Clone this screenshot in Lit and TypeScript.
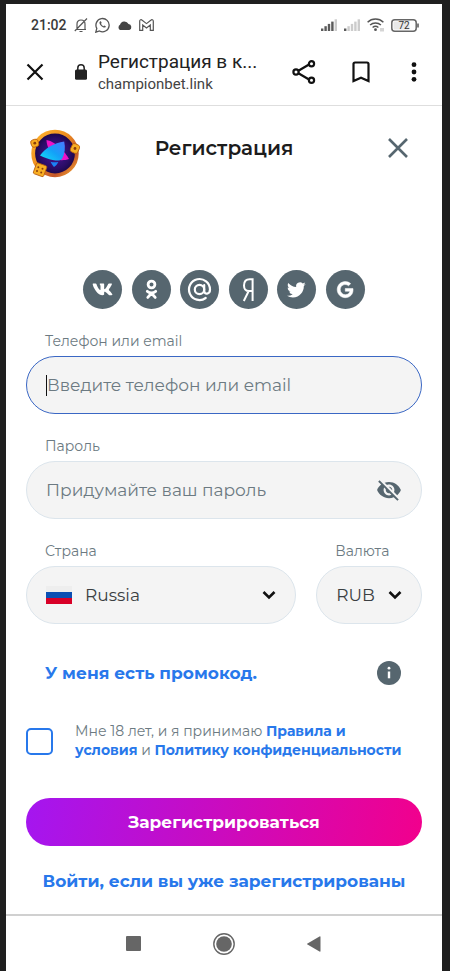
import { LitElement, html, css, svg } from "lit";
import { customElement } from "lit/decorators.js";

const socials = [
  {
    name: "VK",
    art: svg`<path transform="translate(9 10) scale(.0365)" fill="currentColor" d="M545 117.7c3.7-12.5 0-21.7-17.8-21.7h-58.9c-15 0-21.9 7.9-25.6 16.7 0 0-30 73.1-72.4 120.5-13.7 13.7-20 18.1-27.5 18.1-3.7 0-9.4-4.4-9.4-16.9V117.7c0-15-4.2-21.7-16.6-21.7h-92.6c-9.4 0-15 7-15 13.5 0 14.2 21.2 17.5 23.4 57.5v86.8c0 19-3.4 22.5-10.9 22.5-20 0-68.6-73.4-97.4-157.4-5.8-16.3-11.5-22.9-26.6-22.9H38.8c-16.8 0-20.2 7.9-20.2 16.7 0 15.6 20 93.1 93.1 195.5C160.4 378.1 229 416 291.4 416c37.5 0 42.1-8.4 42.1-22.9 0-66.8-3.4-73.1 15.4-73.1 8.7 0 23.7 4.4 58.7 38.1 40 40 46.6 57.9 69 57.9h58.9c16.8 0 25.3-8.4 20.4-25-11.2-34.9-86.9-106.7-90.3-111.5-8.7-11.2-6.2-16.2 0-26.2.1-.1 72-101.3 79.4-135.6z"/>`,
  },
  {
    name: "Одноклассники",
    art: svg`<g fill="none" stroke="currentColor" stroke-width="2.8" stroke-linecap="round" stroke-linejoin="round"><circle cx="19.500" cy="14.500" r="3.400"/><path d="M15.300 21.300c2.600 1.900 5.800 1.900 8.400 0M19.500 23.200l-3.700 4.200M19.500 23.200l3.700 4.200"/></g>`,
  },
  {
    name: "Mail.ru",
    art: svg`<g fill="none" stroke="currentColor" stroke-width="2.200" stroke-linecap="round"><circle cx="19.500" cy="19.500" r="4.700"/><path d="M24.200 15.200v5.600c0 4.200 5.800 3.600 5.800-1.300a10.500 10.500 0 1 0-4.300 8.500"/></g>`,
  },
  {
    name: "Яндекс",
    art: svg`<path fill="none" stroke="currentColor" stroke-width="2" d="M23.600 31V9.300h-2.800c-4.200 0-5.800 3-5.800 6.200 0 3.400 2 5.600 5 5.600h3.600M19.600 21.200L14.800 31"/>`,
  },
  {
    name: "Twitter",
    art: svg`<path transform="translate(10 10.500) scale(.78)" fill="currentColor" d="M23.953 4.570a10 10 0 01-2.825.775 4.958 4.958 0 002.163-2.723c-.951.555-2.005.959-3.127 1.184a4.920 4.920 0 00-8.384 4.482C7.690 8.095 4.067 6.130 1.640 3.162a4.822 4.822 0 00-.666 2.475c0 1.710.870 3.213 2.188 4.096a4.904 4.904 0 01-2.228-.616v.060a4.923 4.923 0 003.946 4.827 4.996 4.996 0 01-2.212.085 4.936 4.936 0 004.604 3.417 9.867 9.867 0 01-6.102 2.105c-.390 0-.779-.023-1.170-.067a13.995 13.995 0 007.557 2.209c9.053 0 13.998-7.496 13.998-13.985 0-.210 0-.420-.015-.630A9.935 9.935 0 0024 4.590z"/>`,
  },
  {
    name: "Google",
    art: svg`<path transform="translate(11.200 11.300) scale(.0325)" fill="currentColor" stroke="currentColor" stroke-width="16" d="M488 261.800C488 403.300 391.100 504 248 504 110.800 504 0 393.200 0 256S110.800 8 248 8c66.800 0 123 24.500 166.300 64.900l-67.500 64.900C258.500 52.600 94.300 116.600 94.300 256c0 86.500 69.100 156.600 153.700 156.600 98.200 0 135-70.400 140.800-106.900H248v-85.300h236.100c2.300 12.700 3.900 24.900 3.900 41.400z"/>`,
  },
];

const signal = (level: number) =>
  svg`${[0, 1, 2, 3, 4].map(
    (i) => svg`<rect x=${i * 3.4} y=${9.5 - i * 2.3} width="2.4" height=${2.5 + i * 2.3} fill=${i < level ? "#5a5a5a" : "#cccccc"}/>`
  )}`;

const chevron = html`<svg class="chevron" width="14" height="10" viewBox="0 0 14 10" aria-hidden="true"><path d="M1.500 2l5.500 5.500L12.500 2" fill="none" stroke="#111" stroke-width="2.600"/></svg>`;

@customElement("app-root")
export class AppRoot extends LitElement {
  static styles = css`
    :host {
      display: block;
      font-family: Montserrat, Inter, "Noto Sans", sans-serif;
      color: #1f2326;
    }
    * { box-sizing: border-box; }
    svg { display: block; flex: none; }
    button, input, select { font: inherit; color: inherit; margin: 0; padding: 0; border: 0; background: none; }
    button { cursor: pointer; }
    a { color: #2878eb; text-decoration: none; font-weight: 700; }
    .device {
      min-height: 100vh;
      padding: 4px 8px 0 6px;
      background: #1f1f1f;
      display: flex;
    }
    .screen {
      flex: 1;
      min-width: 0;
      display: flex;
      flex-direction: column;
      background: #fff;
    }
    .status {
      display: flex;
      align-items: center;
      height: 42px;
      padding: 0 23px 0 25px;
      gap: 7px;
      font: 500 14px/20px Roboto, sans-serif;
      color: #3a3a3a;
    }
    .spacer { flex: 1; }
    .browser {
      display: flex;
      align-items: center;
      justify-content: space-between;
      height: 60px;
      padding: 0 20px;
      padding-bottom: 8px;
      border-bottom: 1px solid #dedede;
      color: #111;
      font-family: Roboto, sans-serif;
    }
    .site { display: flex; align-items: center; }
    .lock { margin: 0 10px 0 30px; }
    .page-title { font-size: 19px; line-height: 24px; color: #222; white-space: nowrap; }
    .page-url { font-size: 15px; line-height: 20px; color: #444; }
    .actions { display: flex; align-items: center; gap: 34px; }
    .content { padding: 22px 20px 20px; }
    .header {
      display: grid;
      grid-template-columns: 52px 1fr 52px;
      align-items: center;
      padding: 0 2px;
    }
    h1 { margin: 0; padding-bottom: 12px; text-align: center; font-size: 20px; line-height: 26px; font-weight: 600; color: #1c1c1c; }
    .close { justify-self: center; padding: 0 0 12px 8px; }
    .socials {
      display: flex;
      justify-content: space-between;
      width: 282px;
      max-width: 100%;
      margin: 90px auto 22px;
    }
    .social { width: 39px; height: 39px; border-radius: 50%; background: #56666f; color: #fff; }
    form { display: flex; flex-direction: column; gap: 22px; }
    .field { display: flex; flex-direction: column; gap: 5px; min-width: 0; }
    .caption { padding-left: 19px; font-size: 14px; line-height: 20px; color: #6c7a82; }
    .pill {
      display: flex;
      align-items: center;
      height: 58px;
      padding: 0 19px;
      border: 1px solid #dce5ec;
      border-radius: 29px;
      background: #f4f4f4;
      font-size: 17px;
      color: #3b3f42;
    }
    .pill.focused { border-color: #3a67c4; }
    .pill input { flex: 1; min-width: 0; height: 100%; outline: none; }
    .pill input::placeholder { color: #6c7a82; opacity: 1; }
    .pill select { flex: 1; min-width: 0; height: 100%; appearance: none; outline: none; }
    .caret { width: 1px; height: 21px; background: #111; }
    .flag { margin-right: 13px; }
    .chevron { pointer-events: none; }
    .row { display: grid; grid-template-columns: 271fr 106fr; gap: 20px; }
    .promo {
      display: flex;
      align-items: center;
      justify-content: space-between;
      padding: 15px 21px 0 19px;
      font-size: 17px;
      line-height: 24px;
    }
    .consent { display: flex; align-items: center; gap: 22px; padding-top: 15px; font-size: 14px; line-height: 19px; color: #6c7a82; }
    .consent label { padding-right: 14px; }
    .consent input { appearance: none; flex: none; width: 27px; height: 27px; border: 2px solid #2878eb; border-radius: 5px; }
    .consent input:checked { background: #2878eb; }
    .submit {
      height: 48px;
      margin-top: 16px;
      border-radius: 24px;
      background: linear-gradient(100deg, #a416f0, #f2008c);
      color: #fff;
      font-size: 17px;
      font-weight: 700;
    }
    .login { text-align: center; font-size: 17px; line-height: 26px; }
    nav {
      margin-top: auto;
      display: flex;
      align-items: center;
      justify-content: center;
      gap: 72px;
      height: 57px;
      border-top: 2px solid #d0d0d0;
    }
  `;

  render() {
    return html`
      <div class="device"><div class="screen">
        <div class="status">
          <span>21:02</span>
          <svg width="14" height="16" viewBox="0 0 14 16" fill="none" stroke="#555" stroke-width="1.200"><path d="M2 12.500h10M3 12V7c0-2.500 1.500-4 4-4s4 1.500 4 4v5M5.500 14.500h3M.8 14L13 1.500"/></svg>
          <svg width="15" height="16" viewBox="0 0 15 16"><path d="M.8 15.200l1-3.800A6.600 6.600 0 1 1 4.500 14z" fill="none" stroke="#555" stroke-width="1.300"/><path d="M5 4.500c-1 .8-.6 2.500 1 4.200s3.700 2.500 4.700 1.200c.4-.7 0-.9-1.500-1.500l-.8.9C7.300 8.800 6.500 8 6 6.800l.7-.8C6.200 4.500 5.800 4.100 5 4.500z" fill="#555"/></svg>
          <svg width="15" height="9" viewBox="0 0 15 9"><path fill="#444" d="M3 9a3 3 0 0 1 0-5.200A4.600 4.600 0 0 1 11.500 3 3.100 3.100 0 0 1 12.300 9z"/></svg>
          <svg width="15" height="12" viewBox="0 0 15 12"><path d="M.7 11.300V2.200C.7.700 2.200.3 3.200 1.200l4.300 3.400 4.300-3.400c1-.9 2.500-.5 2.500 1v9.100h-3V6L7.500 9 3.700 6v5.300z" fill="none" stroke="#555" stroke-width="1.200"/></svg>
          <span class="spacer"></span>
          <svg width="16" height="12" viewBox="0 0 16 12">${signal(4)}</svg>
          <svg width="16" height="12" viewBox="0 0 16 12">${signal(1)}</svg>
          <svg width="17" height="14" viewBox="0 0 17 14"><g fill="none" stroke="#555" stroke-width="1.500"><path d="M.6 4.200a11.500 11.500 0 0 1 15.800 0M3.100 7a8 8 0 0 1 10.800 0M5.600 9.500a4.500 4.500 0 0 1 5.800 0"/></g><circle cx="8.500" cy="11.700" r="1.400" fill="#555"/><path d="M14 10v3.500M16 10v3.500" stroke="#aaa"/></svg>
          <svg width="28" height="13" viewBox="0 0 28 13"><rect x=".8" y=".8" width="24.400" height="11.400" rx="3" fill="none" stroke="#666" stroke-width="1.500"/><rect x="2.500" y="2.500" width="16" height="8" fill="#e8e8e8"/><path d="M27 4.500v4" stroke="#555" stroke-width="1.500"/><text x="13" y="10" text-anchor="middle" font-family="Roboto" font-size="10" font-weight="400" fill="#333">72</text></svg>
        </div>
        <div class="browser">
          <div class="site">
            <button type="button" aria-label="Закрыть вкладку"><svg width="18" height="18" viewBox="0 0 18 18"><path d="M1.500 1.500l15 15M16.500 1.500l-15 15" stroke="#111" stroke-width="2.200"/></svg></button>
            <svg class="lock" width="14" height="16" viewBox="0 0 14 16"><rect x="1" y="5.500" width="12" height="10.300" rx="1.500" fill="#222"/><path d="M3.800 6V4a3.200 3.200 0 0 1 6.400 0v2" fill="none" stroke="#222" stroke-width="1.500"/></svg>
            <div>
              <div class="page-title">Регистрация в к...</div>
              <div class="page-url">championbet.link</div>
            </div>
          </div>
          <div class="actions">
            <button type="button" aria-label="Поделиться"><svg width="24" height="24" viewBox="0 0 24 24" fill="none" stroke="#111" stroke-width="2.200"><path d="M6 11l11-6.500M6 13l11 6.500"/><circle cx="4" cy="12" r="2.600" fill="#fff"/><circle cx="19.500" cy="3.800" r="2.600" fill="#fff"/><circle cx="19.500" cy="20.200" r="2.600" fill="#fff"/></svg></button>
            <button type="button" aria-label="В закладки"><svg width="22" height="22" viewBox="0 0 22 22"><path d="M3.500 20V3a1.500 1.500 0 0 1 1.500-1.500h12A1.500 1.500 0 0 1 18.500 3v17L11 16.700z" fill="none" stroke="#111" stroke-width="2.200"/></svg></button>
            <button type="button" aria-label="Меню"><svg width="16" height="20" viewBox="0 0 16 20" fill="#111"><circle cx="8" cy="2.700" r="2.400"/><circle cx="8" cy="10" r="2.400"/><circle cx="8" cy="17.300" r="2.400"/></svg></button>
          </div>
        </div>
        <main class="content">
          <header class="header">
            <svg width="52" height="52" viewBox="0 0 52 52" role="img" aria-label="Champion">
              <defs>
                <linearGradient id="gold" x1="0" y1="0" x2="1" y2="1"><stop offset="0" stop-color="#ffb52e"/><stop offset=".4" stop-color="#f0901f"/><stop offset=".75" stop-color="#c4562a"/><stop offset="1" stop-color="#ffb52e"/></linearGradient>
                <radialGradient id="night"><stop offset="0" stop-color="#4c1597"/><stop offset=".7" stop-color="#2a0c66"/><stop offset="1" stop-color="#180640"/></radialGradient>
                <linearGradient id="blue" x1="1" y1="0" x2="0" y2="1"><stop offset="0" stop-color="#4a78ff"/><stop offset=".5" stop-color="#14a0f8"/><stop offset="1" stop-color="#12e0f5"/></linearGradient>
              </defs>
              <circle cx="27" cy="25.500" r="21.800" fill="url(#night)" stroke="url(#gold)" stroke-width="3.800"/>
              <path d="M18.500 12c5 1 10 4 14 8 3.500 3.500 6.500 7.500 8.500 11-4 1.500-9 1.500-13 .5-5-5-9.500-13-9.500-19.500z" fill="#ee12c8"/>
              <path d="M36.200 13.500c1.300 6 .8 12-2.200 17.500-2 1.800-5 1.800-8 1.200-5-.8-10-2.500-14-4.700C17 20.500 26 14.800 36.200 13.500z" fill="url(#blue)"/>
              <path d="M22.500 33.800c2.500.7 5 .7 7.800.2-1 2-2.500 4-4.300 5-1-1-2.500-3-3.500-5.200z" fill="#1b82f6"/>
              <g fill="#f8ae22" stroke="#b55a10" stroke-width=".8"><rect x="3" y="11.500" width="7.500" height="7.500" rx="2.500" transform="rotate(-18 6.700 15.200)"/><rect x="43" y="16" width="8" height="9" rx="2.500" transform="rotate(25 47 20.500)"/><rect x="6.500" y="36" width="11" height="11.500" rx="1.500" transform="rotate(20 12 42)"/></g>
              <g fill="#8a3d0b"><circle cx="6.800" cy="15.200" r="1.400"/><circle cx="47" cy="20.500" r="1.400"/><circle cx="10.300" cy="39.300" r="1"/><circle cx="14.500" cy="40.700" r="1"/><circle cx="9" cy="43" r="1"/><circle cx="13.200" cy="44.500" r="1"/></g>
            </svg>
            <h1>Регистрация</h1>
            <button class="close" type="button" aria-label="Закрыть"><svg width="20" height="20" viewBox="0 0 20 20"><path d="M1 1l18 18M19 1L1 19" stroke="#56666f" stroke-width="2.600"/></svg></button>
          </header>
          <div class="socials">
            ${socials.map((s) => html`<button class="social" type="button" aria-label=${s.name}><svg width="39" height="39" viewBox="0 0 39 39">${s.art}</svg></button>`)}
          </div>
          <form @submit=${(e: Event) => e.preventDefault()}>
            <div class="field">
              <label class="caption" for="login">Телефон или email</label>
              <div class="pill focused"><span class="caret"></span><input id="login" type="text" placeholder="Введите телефон или email" /></div>
            </div>
            <div class="field">
              <label class="caption" for="password">Пароль</label>
              <div class="pill">
                <input id="password" type="password" placeholder="Придумайте ваш пароль" />
                <button type="button" aria-label="Показать пароль"><svg width="26" height="26" viewBox="0 0 24 24"><path fill="#56666f" d="M12 7c2.760 0 5 2.240 5 5 0 .650-.130 1.260-.360 1.830l2.920 2.920c1.510-1.260 2.700-2.890 3.430-4.750-1.730-4.390-6-7.500-11-7.500-1.400 0-2.740.250-3.980.700l2.160 2.160C10.740 7.130 11.350 7 12 7zM2 4.270l2.280 2.280.460.460C3.080 8.300 1.780 10.020 1 12c1.730 4.390 6 7.500 11 7.500 1.550 0 3.030-.300 4.380-.840l.420.420L19.730 22 21 20.730 3.270 3 2 4.270zM7.530 9.800l1.550 1.550c-.050.210-.080.430-.080.650 0 1.660 1.340 3 3 3 .220 0 .440-.030.650-.080l1.550 1.550c-.670.330-1.410.530-2.200.530-2.760 0-5-2.240-5-5 0-.790.200-1.530.530-2.200zm4.310-.780l3.150 3.150.020-.160c0-1.660-1.340-3-3-3l-.170.010z"/></svg></button>
              </div>
            </div>
            <div class="row">
              <div class="field">
                <label class="caption" for="country">Страна</label>
                <div class="pill">
                  <svg class="flag" width="26" height="18" viewBox="0 0 26 18"><path fill="#eee" d="M0 0h26v6H0z"/><path fill="#0b4fb3" d="M0 6h26v6H0z"/><path fill="#d80027" d="M0 12h26v6H0z"/></svg>
                  <select id="country"><option>Russia</option></select>${chevron}
                </div>
              </div>
              <div class="field">
                <label class="caption" for="currency">Валюта</label>
                <div class="pill"><select id="currency"><option>RUB</option></select>${chevron}</div>
              </div>
            </div>
            <div class="promo">
              <a href="#promo">У меня есть промокод.</a>
              <button type="button" aria-label="О промокоде"><svg width="24" height="24" viewBox="0 0 24 24"><circle cx="12" cy="12" r="12" fill="#56666f"/><circle cx="12" cy="7.200" r="1.400" fill="#fff"/><path d="M12 10.500v6.800" stroke="#fff" stroke-width="2.400"/></svg></button>
            </div>
            <div class="consent">
              <input id="consent" type="checkbox" />
              <label for="consent">Мне 18 лет, и я принимаю <a href="#rules">Правила и условия</a> и <a href="#privacy">Политику конфиденциальности</a></label>
            </div>
            <button class="submit" type="submit">Зарегистрироваться</button>
            <a class="login" href="#login">Войти, если вы уже зарегистрированы</a>
          </form>
        </main>
        <nav aria-label="Навигация">
          <button type="button" aria-label="Недавние"><svg width="15" height="15" viewBox="0 0 15 15"><rect width="15" height="15" rx="1" fill="#666"/></svg></button>
          <button type="button" aria-label="Домой"><svg width="22" height="22" viewBox="0 0 22 22"><circle cx="11" cy="11" r="10.200" fill="none" stroke="#666" stroke-width="1.400"/><circle cx="11" cy="11" r="7.800" fill="#666"/></svg></button>
          <button type="button" aria-label="Назад"><svg width="15" height="16" viewBox="0 0 15 16"><path d="M13.500 1v14a.7.700 0 0 1-1 .6L.5 8.600a.7.700 0 0 1 0-1.200L12.500.400a.7.700 0 0 1 1 .6z" fill="#666"/></svg></button>
        </nav>
      </div></div>
    `;
  }
}
